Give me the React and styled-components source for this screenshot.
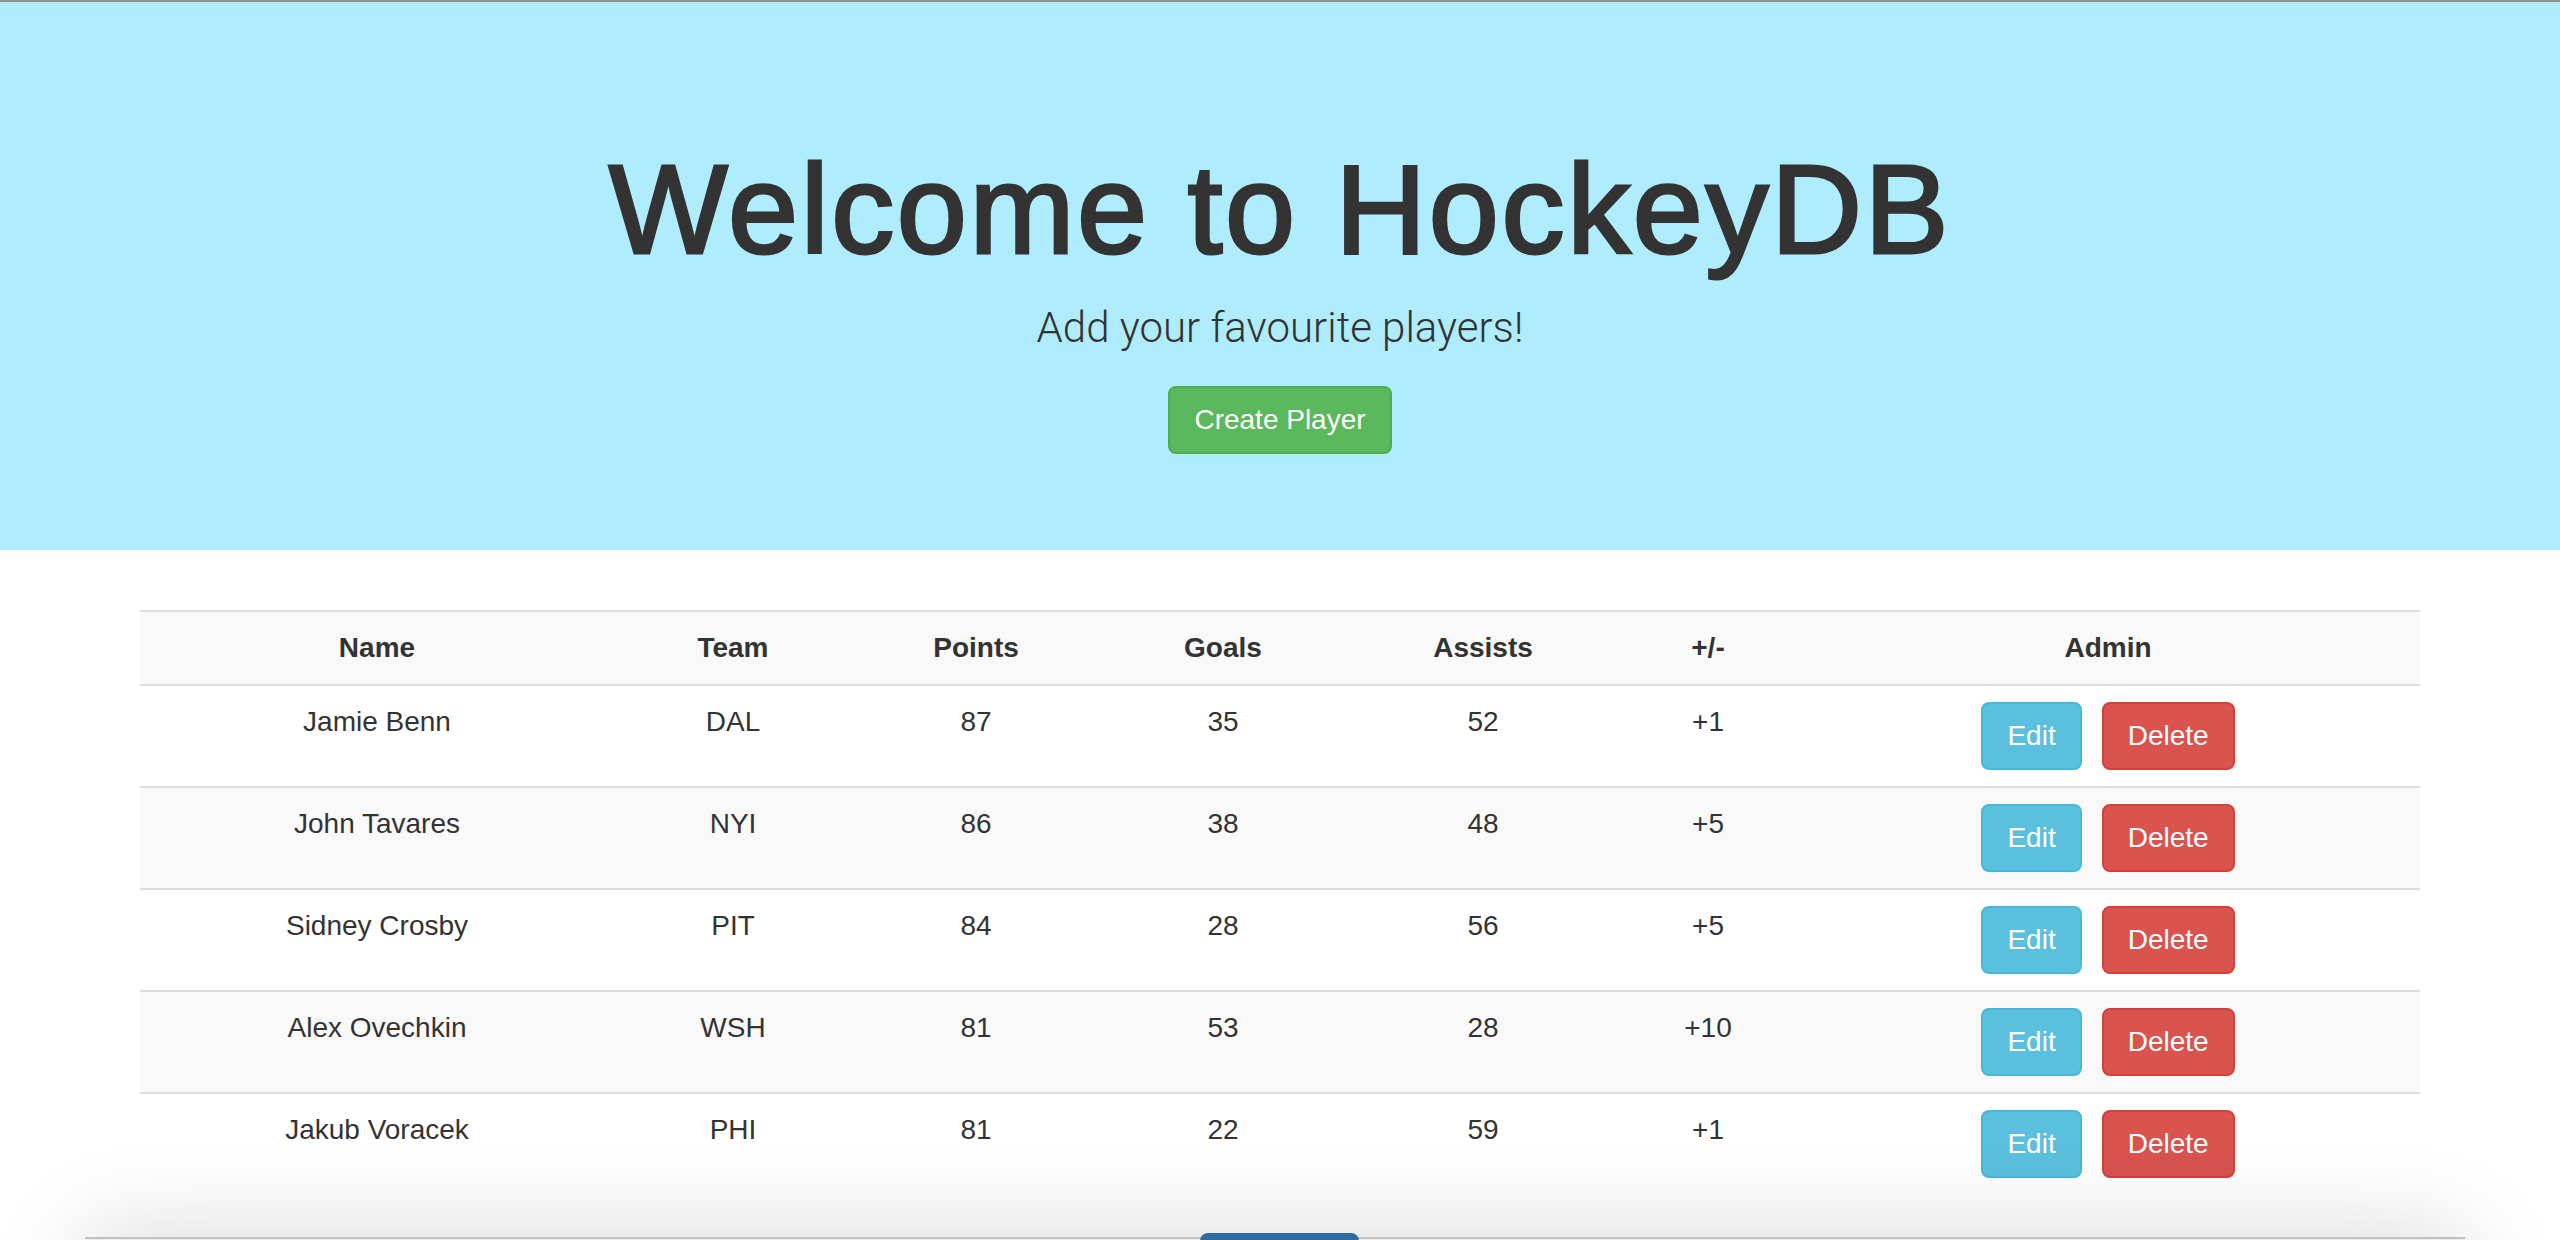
import React from "react";
import styled, { createGlobalStyle } from "styled-components";

const GlobalStyle = createGlobalStyle`
  *, *::before, *::after { box-sizing: border-box; }
  html, body { margin: 0; padding: 0; background: #fff; }
  body {
    font-family: "Liberation Sans", Arial, Helvetica, sans-serif;
    color: #333;
    overflow: hidden;
  }
`;

const Page = styled.div`
  min-height: 1240px;
`;

const TopRule = styled.div`
  height: 2px;
  background: #8f8f8f;
`;

const Jumbotron = styled.header`
  background: #afecfd;
  padding: 99px 30px 96px;
  margin-bottom: 60px;
  text-align: center;
`;

const Title = styled.h1`
  margin: 40px 0 18px;
  font-size: 126px;
  line-height: 1.1;
  font-weight: 400;
  letter-spacing: 2.6px;
  color: #333;
  -webkit-text-stroke: 3px #333;
`;

const Lead = styled.p`
  margin: 0 0 28px;
  font-family: Roboto, "Liberation Sans", sans-serif;
  font-weight: 300;
  font-size: 42px;
  line-height: 60px;
  color: #333;
`;

const variants = {
  success: { bg: "#5cb85c", border: "#4cae4c" },
  info: { bg: "#5bc0de", border: "#46b8da" },
  danger: { bg: "#d9534f", border: "#d43f3a" },
};

const Button = styled.button`
  display: inline-block;
  margin: 0;
  font-family: "Liberation Sans", Arial, sans-serif;
  font-size: 28px;
  line-height: 40px;
  font-weight: 400;
  padding: 12px 24px;
  color: #fff;
  background: ${(p) => variants[p.$variant].bg};
  border: 2px solid ${(p) => variants[p.$variant].border};
  border-radius: 8px;
  cursor: pointer;
`;

const Container = styled.main`
  width: 2340px;
  margin: 0 auto;
  padding: 0 30px;
`;

const Table = styled.table`
  width: 100%;
  border-collapse: collapse;
  table-layout: fixed;
  margin-bottom: 40px;
`;

const HeadRow = styled.tr`
  background: #f9f9f9;
`;

const Th = styled.th`
  width: ${(p) => p.$w}px;
  padding: 16px;
  font-size: 28px;
  line-height: 40px;
  font-weight: 700;
  text-align: center;
  vertical-align: top;
  border-top: 2px solid #ddd;
  color: #333;
`;

const Row = styled.tr`
  &:nth-child(even) {
    background: #f9f9f9;
  }
`;

const Td = styled.td`
  padding: 16px;
  font-size: 28px;
  line-height: 40px;
  text-align: center;
  vertical-align: top;
  border-top: 2px solid #ddd;
  color: #333;
`;

const Actions = styled.div`
  display: flex;
  justify-content: center;
  gap: 20px;
`;

const Drawer = styled.div`
  position: fixed;
  left: 85px;
  right: 95px;
  top: 1237px;
  height: 200px;
  background: #ececec;
  border-top: 2px solid #c2c2c2;
  box-shadow: 0 0 100px rgba(0, 0, 0, 0.16);
`;

const DrawerTab = styled.div`
  position: absolute;
  left: 1115px;
  top: -6px;
  width: 159px;
  height: 30px;
  background: #2d6ca2;
  border-radius: 8px 8px 0 0;
`;

const columns = [
  { label: "Name", w: 474 },
  { label: "Team", w: 238 },
  { label: "Points", w: 248 },
  { label: "Goals", w: 246 },
  { label: "Assists", w: 274 },
  { label: "+/-", w: 176 },
  { label: "Admin", w: 624 },
];

const players = [
  { name: "Jamie Benn", team: "DAL", points: 87, goals: 35, assists: 52, pm: "+1" },
  { name: "John Tavares", team: "NYI", points: 86, goals: 38, assists: 48, pm: "+5" },
  { name: "Sidney Crosby", team: "PIT", points: 84, goals: 28, assists: 56, pm: "+5" },
  { name: "Alex Ovechkin", team: "WSH", points: 81, goals: 53, assists: 28, pm: "+10" },
  { name: "Jakub Voracek", team: "PHI", points: 81, goals: 22, assists: 59, pm: "+1" },
];

export default function App() {
  return (
    <Page>
      <GlobalStyle />
      <TopRule />
      <Jumbotron>
        <Title>Welcome to HockeyDB</Title>
        <Lead>Add your favourite players!</Lead>
        <Button $variant="success">Create Player</Button>
      </Jumbotron>
      <Container>
        <Table>
          <thead>
            <HeadRow>
              {columns.map((c) => (
                <Th key={c.label} $w={c.w}>
                  {c.label}
                </Th>
              ))}
            </HeadRow>
          </thead>
          <tbody>
            {players.map((p) => (
              <Row key={p.name}>
                <Td>{p.name}</Td>
                <Td>{p.team}</Td>
                <Td>{p.points}</Td>
                <Td>{p.goals}</Td>
                <Td>{p.assists}</Td>
                <Td>{p.pm}</Td>
                <Td>
                  <Actions>
                    <Button $variant="info">Edit</Button>
                    <Button $variant="danger">Delete</Button>
                  </Actions>
                </Td>
              </Row>
            ))}
          </tbody>
        </Table>
      </Container>
      <Drawer>
        <DrawerTab />
      </Drawer>
    </Page>
  );
}
